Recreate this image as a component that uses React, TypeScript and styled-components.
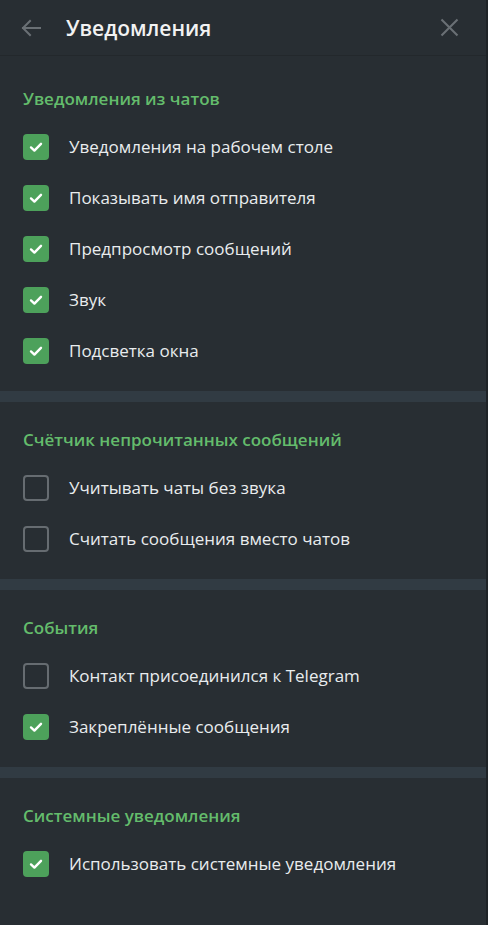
import React from "react";
import styled, { createGlobalStyle } from "styled-components";

const Global = createGlobalStyle`
  html, body { margin: 0; padding: 0; background: #282e33; }
  body { font-family: "Open Sans", "Noto Sans", sans-serif; }
  * { box-sizing: border-box; }
`;

const Page = styled.div`
  width: 488px;
  min-height: 925px;
  background: #282e33;
  border-right: 2px solid #1e2327;
  display: flex;
  flex-direction: column;
`;

const Header = styled.header`
  height: 55px;
  display: flex;
  align-items: center;
  padding: 0 27px 0 20px;
  box-shadow: 0 1px 0 rgba(0, 0, 0, 0.12);
`;

const IconButton = styled.button<{ $size: number }>`
  width: ${(p) => p.$size}px;
  height: ${(p) => p.$size}px;
  padding: 0;
  border: none;
  background: none;
  color: #6a7075;
  display: flex;
  align-items: center;
  justify-content: center;
`;

const Title = styled.h1`
  flex: 1;
  margin: 0 0 0 24px;
  font-size: 21px;
  font-weight: 600;
  color: #f2f2f2;
`;

const Content = styled.div`
  padding-top: 6px;
  display: flex;
  flex-direction: column;
`;

const Section = styled.section`
  padding: 26px 0 15px 0;
`;

const Divider = styled.div`
  height: 11px;
  background: #313b43;
`;

const SectionTitle = styled.h2`
  margin: 0 0 10px 0;
  padding-left: 23px;
  height: 24px;
  line-height: 24px;
  font-size: 17px;
  font-weight: 600;
  color: #64bc6c;
`;

const Row = styled.label`
  height: 51px;
  display: flex;
  align-items: center;
  padding-left: 23px;
  gap: 20px;
  font-size: 17px;
  color: #e9ecee;
`;

const Box = styled.span<{ $checked: boolean }>`
  width: 26px;
  height: 26px;
  border-radius: 4px;
  flex-shrink: 0;
  display: flex;
  align-items: center;
  justify-content: center;
  background: ${(p) => (p.$checked ? "#4da15b" : "transparent")};
  border: ${(p) => (p.$checked ? "none" : "2px solid #666c71")};
`;

const Check = () => (
  <svg width="16" height="16" viewBox="0 0 16 16">
    <path d="M3 8.4 L6.4 11.6 L13 4.8" fill="none" stroke="#fff" strokeWidth="2.4" strokeLinecap="round" strokeLinejoin="round" />
  </svg>
);

type Item = { label: string; checked: boolean };
const sections: { title: string; items: Item[] }[] = [
  {
    title: "Уведомления из чатов",
    items: [
      { label: "Уведомления на рабочем столе", checked: true },
      { label: "Показывать имя отправителя", checked: true },
      { label: "Предпросмотр сообщений", checked: true },
      { label: "Звук", checked: true },
      { label: "Подсветка окна", checked: true },
    ],
  },
  {
    title: "Счётчик непрочитанных сообщений",
    items: [
      { label: "Учитывать чаты без звука", checked: false },
      { label: "Считать сообщения вместо чатов", checked: false },
    ],
  },
  {
    title: "События",
    items: [
      { label: "Контакт присоединился к Telegram", checked: false },
      { label: "Закреплённые сообщения", checked: true },
    ],
  },
  {
    title: "Системные уведомления",
    items: [{ label: "Использовать системные уведомления", checked: true }],
  },
];

export default function App() {
  return (
    <Page>
      <Global />
      <Header>
        <IconButton $size={22} aria-label="back">
          <svg width="22" height="22" viewBox="0 0 22 22">
            <path d="M20 11 H3 M10 4 L3 11 L10 18" fill="none" stroke="currentColor" strokeWidth="2" strokeLinecap="square" />
          </svg>
        </IconButton>
        <Title>Уведомления</Title>
        <IconButton $size={19} aria-label="close">
          <svg width="19" height="19" viewBox="0 0 19 19">
            <path d="M1.5 1.5 L17.5 17.5 M17.5 1.5 L1.5 17.5" fill="none" stroke="currentColor" strokeWidth="2.1" />
          </svg>
        </IconButton>
      </Header>
      <Content>
        {sections.map((s, i) => (
          <React.Fragment key={s.title}>
            {i > 0 && <Divider />}
            <Section>
              <SectionTitle>{s.title}</SectionTitle>
              {s.items.map((it) => (
                <Row key={it.label}>
                  <Box $checked={it.checked}>{it.checked && <Check />}</Box>
                  {it.label}
                </Row>
              ))}
            </Section>
          </React.Fragment>
        ))}
      </Content>
    </Page>
  );
}
